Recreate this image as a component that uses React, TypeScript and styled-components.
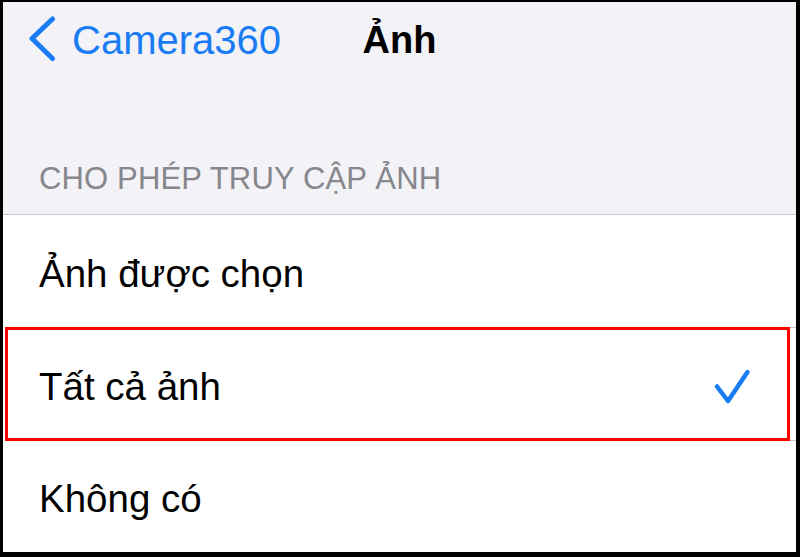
import React from 'react'
import styled, { createGlobalStyle } from 'styled-components'

const GlobalStyle = createGlobalStyle`
    html, body {
        margin: 0;
        padding: 0;
        background: #000;
    }
    * {
        box-sizing: border-box;
    }
`

const options = [
    { label: 'Ảnh được chọn', selected: false },
    { label: 'Tất cả ảnh', selected: true },
    { label: 'Không có', selected: false },
]

const App: React.FC = () => {
    return (
        <>
            <GlobalStyle />
            <Frame>
                <TopArea>
                    <NavBar>
                        <BackButton>
                            <svg width="32" height="48" viewBox="0 0 32 48" fill="none">
                                <path
                                    d="M26.5 3 L6 22.5 L26.5 42.5"
                                    stroke="#1a7cf5"
                                    strokeWidth="5"
                                    strokeLinecap="round"
                                    strokeLinejoin="round"
                                />
                            </svg>
                            <BackLabel>Camera360</BackLabel>
                        </BackButton>
                        <Title>Ảnh</Title>
                        <span />
                    </NavBar>
                    <SectionLabel>CHO PHÉP TRUY CẬP ẢNH</SectionLabel>
                </TopArea>
                <List>
                    {options.map((opt, i) => (
                        <Row key={opt.label} $last={i === options.length - 1}>
                            <RowInner $last={i === options.length - 1}>
                                <RowText>{opt.label}</RowText>
                                {opt.selected && (
                                    <svg width="44" height="40" viewBox="0 0 44 40" fill="none">
                                        <path
                                            d="M7 19.5 L18 34 L37.5 5"
                                            stroke="#1a7cf5"
                                            strokeWidth="4.5"
                                            strokeLinecap="round"
                                            strokeLinejoin="round"
                                        />
                                    </svg>
                                )}
                            </RowInner>
                            {opt.selected && <Highlight />}
                        </Row>
                    ))}
                </List>
            </Frame>
        </>
    )
}

const Frame = styled.div`
    width: 800px;
    height: 557px;
    border-style: solid;
    border-color: #000;
    border-width: 2px 4px 5px 3px;
    background: #fff;
    display: flex;
    flex-direction: column;
    overflow: hidden;
    font-family: 'Liberation Sans', Arial, sans-serif;
`
const TopArea = styled.div`
    height: 213px;
    flex-shrink: 0;
    background: #f2f2f7;
    border-bottom: 1px solid #c6c6c8;
    display: flex;
    flex-direction: column;
    justify-content: space-between;
`
const NavBar = styled.div`
    height: 76px;
    display: grid;
    grid-template-columns: 1fr auto 1fr;
    align-items: center;
`
const BackButton = styled.div`
    display: flex;
    align-items: center;
    gap: 14px;
    padding-left: 23px;
    color: #1a7cf5;
`
const BackLabel = styled.span`
    font-size: 40px;
    line-height: normal;
    color: #1a7cf5;
`
const Title = styled.span`
    font-size: 38px;
    font-weight: 700;
    color: #000;
`
const SectionLabel = styled.div`
    padding: 0 0 17px 36px;
    font-size: 31px;
    letter-spacing: 0.15px;
    color: #86868b;
    line-height: normal;
`
const List = styled.div`
    flex: 1;
    display: flex;
    flex-direction: column;
`
const Row = styled.div<{ $last?: boolean }>`
    position: relative;
    padding-left: 36px;
    height: ${(p) => (p.$last ? 'auto' : '113px')};
    flex: ${(p) => (p.$last ? '1' : '0 0 auto')};
    display: flex;
`
const RowInner = styled.div<{ $last?: boolean }>`
    flex: 1;
    display: flex;
    align-items: center;
    justify-content: space-between;
    padding-top: 5px;
    padding-right: 42px;
    border-bottom: ${(p) => (p.$last ? 'none' : '1px solid #c6c6c8')};
`
const RowText = styled.span`
    font-size: 38.5px;
    color: #000;
    line-height: normal;
`
const Highlight = styled.div`
    position: absolute;
    left: 2px;
    top: -1px;
    width: 785px;
    height: 114px;
    border: 3px solid #f00;
    pointer-events: none;
`

export default App
